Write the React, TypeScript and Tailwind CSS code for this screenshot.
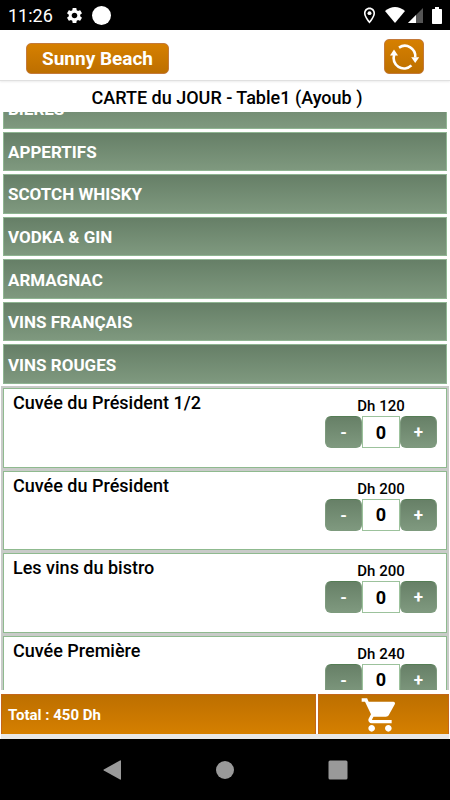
import { useEffect, useRef, useState } from "react";
import { MdOutlineLocationOn, MdSettings, MdShoppingCart } from "react-icons/md";

const categories = [
  "BIÈRES",
  "APPERTIFS",
  "SCOTCH WHISKY",
  "VODKA & GIN",
  "ARMAGNAC",
  "VINS FRANÇAIS",
  "VINS ROUGES",
];

const wines = [
  { name: "Cuvée du Président 1/2", price: 120 },
  { name: "Cuvée du Président", price: 200 },
  { name: "Les vins du bistro", price: 200 },
  { name: "Cuvée Première", price: 240 },
];

function StatusBar() {
  return (
    <div className="flex h-[30px] shrink-0 items-center bg-black pl-2 pr-2 text-white">
      <span className="text-[18px]">11:26</span>
      <MdSettings size={19} className="ml-3" />
      <span className="ml-2 size-[19px] rounded-full bg-white" />
      <div className="ml-auto flex items-center">
        <MdOutlineLocationOn size={19} />
        <svg width="20" height="16" viewBox="0 0 20 16" className="ml-[6px]" fill="currentColor">
          <path d="M0 4 Q10 -4 20 4 L10 16 Z" />
        </svg>
        <svg width="15" height="15" viewBox="0 0 15 15" className="ml-[3px]">
          <path d="M0 15 L15 0 V15 Z" fill="#555" />
          <path d="M0 15 L8 7 V15 Z" fill="#fff" />
        </svg>
        <svg width="10" height="17" viewBox="0 0 10 17" className="ml-[9px]" fill="currentColor">
          <path d="M3 0h4v2h2.2a.8.8 0 0 1 .8.8v13.4a.8.8 0 0 1-.8.8H.8a.8.8 0 0 1-.8-.8V2.8A.8.8 0 0 1 .8 2H3z" />
        </svg>
      </div>
    </div>
  );
}

function Header() {
  return (
    <header className="flex h-[51px] shrink-0 items-end justify-between border-b border-[#e0e0e0] px-[26px] pb-[6px] shadow-[0_1px_2px_rgba(0,0,0,0.08)]">
      <button className="h-[31px] w-[143px] rounded-[5px] border border-[#c47a3a] bg-linear-to-b from-[#d68000] to-[#bd6f00] text-[19px] leading-none font-bold text-white">
        Sunny Beach
      </button>
      <button
        aria-label="Refresh"
        className="flex h-[35px] w-10 items-center justify-center rounded-[5px] border border-[#c47a3a] bg-linear-to-b from-[#d68000] to-[#bd6f00] text-white"
      >
        <svg width="32" height="32" viewBox="0 0 32 32" fill="none" stroke="currentColor" strokeWidth="2.6">
          <path d="M11 6.6 A10.4 10.4 0 0 1 27.2 16.4" />
          <path d="M23.4 24.4 A10.4 10.4 0 0 1 6.2 13.6" />
          <path d="M6 8.6 L10 14.4 H2 Z" fill="currentColor" stroke="none" />
          <path d="M27.2 22 L23.2 16.2 H31.2 Z" fill="currentColor" stroke="none" />
        </svg>
      </button>
    </header>
  );
}

function WineCard({ name, price }: { name: string; price: number }) {
  const [qty, setQty] = useState(0);

  return (
    <article className="flex flex-1 items-start justify-between border border-[#8fba8f] bg-white px-[9px]">
      <h3 className="pt-[3px] text-[18px] leading-[22px] font-medium">{name}</h3>
      <div className="pt-[7px] text-center">
        <p className="text-[15px] leading-5 font-medium">Dh {price}</p>
        <div className="flex h-8">
          <button
            aria-label={`Remove ${name}`}
            onClick={() => setQty(Math.max(0, qty - 1))}
            className="w-[37px] rounded-md border border-[#7d9a7d] border-t-[#557d55] bg-linear-to-b from-[#678067] to-[#7f997f] pt-px text-[17px] leading-none font-bold text-white"
          >
            -
          </button>
          <input
            aria-label={`Quantity of ${name}`}
            value={qty}
            onChange={(e) => setQty(Number(e.target.value) || 0)}
            className="w-[38px] border border-[#9cc29c] bg-white text-center text-[18px] font-bold"
          />
          <button
            aria-label={`Add ${name}`}
            onClick={() => setQty(qty + 1)}
            className="w-[37px] rounded-md border border-[#7d9a7d] border-t-[#557d55] bg-linear-to-b from-[#678067] to-[#7f997f] pt-px text-[17px] leading-none font-bold text-white"
          >
            +
          </button>
        </div>
      </div>
    </article>
  );
}

export default function App() {
  const listRef = useRef<HTMLElement>(null);

  useEffect(() => {
    if (listRef.current) listRef.current.scrollTop = 23;
  }, []);

  return (
    <div className="flex h-screen flex-col bg-white font-[Roboto,sans-serif] text-black">
      <StatusBar />
      <Header />
      <h1 className="h-[31px] shrink-0 pl-1 text-center text-[18px] leading-[34px] font-medium">
        CARTE du JOUR - Table1 (Ayoub )
      </h1>

      <main ref={listRef} className="min-h-0 flex-1 overflow-y-auto [scrollbar-width:none]">
        <div className="flex h-[295px] flex-col gap-[3px] px-[3px]">
          {categories.map((category) => (
            <button
              key={category}
              className="flex-1 border border-[#8fb592] bg-linear-to-b from-[#667f67] to-[#7f997f] pt-[2px] pl-1 text-left text-[17px] leading-none font-bold text-white"
            >
              {category}
            </button>
          ))}
        </div>

        <div className="mx-px mt-[2px] flex h-[331px] flex-col gap-[3px] bg-[#c9cbc9] p-[2px]">
          {wines.map((wine) => (
            <WineCard key={wine.name} name={wine.name} price={wine.price} />
          ))}
        </div>
      </main>

      <footer className="mx-px mt-1 grid h-10 shrink-0 grid-cols-[315fr_131fr] gap-[2px] text-white">
        <div className="flex items-center border border-[#c4661a] bg-linear-to-b from-[#bd6f00] to-[#d68000] pl-[6px] text-[15px] font-bold">
          Total : 450 Dh
        </div>
        <button
          aria-label="Cart"
          className="flex items-center justify-center border border-[#c4661a] bg-linear-to-b from-[#bd6f00] to-[#d68000] pr-2"
        >
          <MdShoppingCart size={40} />
        </button>
      </footer>
      <div className="mx-px h-[5px] shrink-0 bg-[#e8e8e8]" />

      <nav className="flex h-[61px] shrink-0 items-center justify-center bg-black text-[#999]">
        <div className="grid w-3/4 grid-cols-3 justify-items-center">
          <button aria-label="Back">
            <svg width="20" height="20" viewBox="0 0 20 20" fill="currentColor">
              <path d="M17 0.5 Q18 0 18 1 V19 Q18 20 17 19.5 L0.8 10.6 Q0 10 0.8 9.4 Z" />
            </svg>
          </button>
          <button aria-label="Home">
            <svg width="20" height="20" viewBox="0 0 20 20" fill="currentColor">
              <circle cx="10" cy="10" r="9" />
            </svg>
          </button>
          <button aria-label="Recent apps">
            <svg width="20" height="20" viewBox="0 0 20 20" fill="currentColor">
              <rect x="0.5" y="0.5" width="19" height="19" rx="1.5" />
            </svg>
          </button>
        </div>
      </nav>
    </div>
  );
}
